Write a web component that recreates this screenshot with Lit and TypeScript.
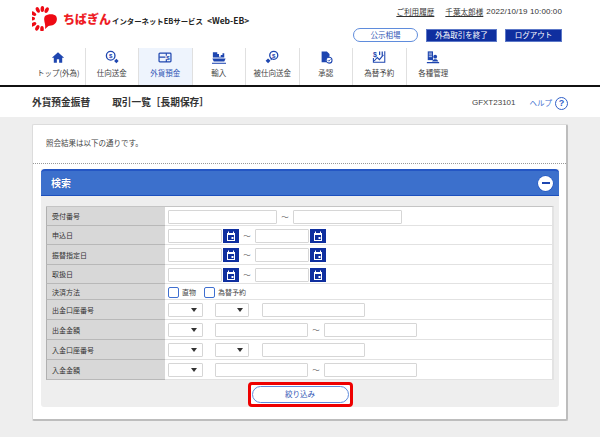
import { LitElement, html, css, svg } from "lit";
import { customElement } from "lit/decorators.js";

const icons: Record<string, unknown> = {
  home: svg`<path d="M8 2 1 8.200h2.200V14h3.500v-4h2.600v4h3.500V8.200H15z"/>`,
  send: svg`<circle cx="6.500" cy="6" r="4.900" fill="none" stroke="currentColor" stroke-width="1.500"/><text x="6.500" y="8.600" text-anchor="middle" font-size="7" font-family="Liberation Sans" font-weight="700">$</text><path d="M13 9.500l2.600 2.600-2.600 2.600-2.600-2.600z"/>`,
  deposit: svg`<rect x="1.200" y="3" width="13.600" height="10" rx="1" fill="none" stroke="currentColor" stroke-width="1.400"/><path d="M1.500 7.500h7M9.500 3v3M9.500 10v3" stroke="currentColor" stroke-width="1.300" fill="none"/><text x="11.500" y="10.500" text-anchor="middle" font-size="7" font-family="Liberation Sans" font-weight="700">$</text>`,
  ship: svg`<path d="M1 2h5v2h2v3h2V5h2V3h2v5H1z"/><path d="M.5 9h15l-1.500 3.500H2z"/><path d="M0 14h16v1.200H0z"/>`,
  receive: svg`<circle cx="10" cy="5.500" r="4.600" fill="none" stroke="currentColor" stroke-width="1.500"/><text x="10" y="8" text-anchor="middle" font-size="7" font-family="Liberation Sans" font-weight="700">$</text><path d="M3.500 9l2.800 2.800-2.800 2.800L.7 11.800z"/><path d="M6 9.500l1.500-1.200 1 1L7 11z"/>`,
  approve: svg`<path d="M3 1h6l3 3v3.200a4 4 0 0 0-3.500 6.300H3z"/><circle cx="11.500" cy="11" r="3.400" fill="none" stroke="currentColor" stroke-width="1.200"/><path d="M10 11l1.200 1.200 1.800-2" fill="none" stroke="currentColor" stroke-width="1"/>`,
  chart: svg`<text x="3.500" y="7" text-anchor="middle" font-size="8" font-family="Liberation Sans" font-weight="700">$</text><path d="M8 1h1.400v4H8zM11 1h1.400v5H11zM14 .8h1.200v13.200H1V8.500h1.200v4.300H14z"/><path d="M2.500 12 6 8l2.500 2.500L13 5" fill="none" stroke="currentColor" stroke-width="1.300"/>`,
  admin: svg`<rect x="2" y="1" width="6" height="10"/><path d="M3.200 3h3.600M3.200 5h3.600M3.200 7h3.600" stroke="#fff" stroke-width=".8"/><circle cx="10.500" cy="7" r="2.200"/><path d="M7 12.500c.6-2 2-2.600 3.500-2.600s3 .6 3.500 2.600zM1 13.200h14v1.300H1z"/>`,
};

const nav = [
  ["トップ(外為)", "home"],
  ["仕向送金", "send"],
  ["外貨預金", "deposit"],
  ["輸入", "ship"],
  ["被仕向送金", "receive"],
  ["承認", "approve"],
  ["為替予約", "chart"],
  ["各種管理", "admin"],
];

const rays = [28, 2, -25, -58, -88, -122, -152, -180];

@customElement("app-root")
export class AppRoot extends LitElement {
  static styles = css`
    :host {
      display: block;
      width: 600px;
      height: 437px;
      overflow: hidden;
      background: #eeeeee;
      font-family: "Noto Sans CJK JP", "Noto Sans", sans-serif;
      font-size: 7.5px;
      color: #444;
      line-height: 1;
    }
    header { background: #fff; height: 85px; }
    .top { display: flex; justify-content: space-between; height: 48px; padding: 0 38px 0 32px; }
    .logo { display: flex; align-items: center; height: 36px; }
    .mark { width: 32px; height: 26px; margin-top: -1px; color: #ee0a14; flex: none; }
    .bank { color: #ee1c25; font-size: 12px; font-weight: 900; margin: 2px 0 0 -1px; width: 50px; }
    .svc { color: #222; font-size: 7.4px; font-weight: 700; white-space: nowrap; margin: 4px 0 0 -1px; }
    .svc span { margin-left: 4px; font-size: 8.5px; }
    .right { display: flex; flex-direction: column; align-items: flex-end; padding-top: 7px; gap: 11px; }
    .meta { display: flex; align-items: center; gap: 11px; color: #333; height: 10px; }
    .meta u { font-size: 7.6px; }
    .meta .date { margin-left: -8px; font-family: "Liberation Sans", sans-serif; font-size: 8px; letter-spacing: .12px; white-space: nowrap; }
    .btns { display: flex; align-items: center; gap: 8px; }
    .pill { width: 65px; height: 14px; box-sizing: border-box; border: 1px solid #5f8cdc; border-radius: 7px; color: #2f55b5; display: flex; align-items: center; justify-content: center; background: #fff; }
    .solid { height: 13px; box-sizing: border-box; background: #0f2f9f; border: 1px solid #5c78c8; color: #fff; display: flex; align-items: center; justify-content: center; }
    .w71 { width: 71px; }
    .w57 { width: 57px; }
    nav { display: grid; grid-template-columns: repeat(8, 53.5px); padding-left: 32px; height: 37px; }
    .item { display: flex; flex-direction: column; align-items: center; gap: 4px; padding-top: 2px; box-sizing: border-box; border-right: 1px solid #e0e0e0; color: #444; white-space: nowrap; }
    .item:last-child { border-right: 0; }
    .item.on { background: #eef4fd; color: #2f55b5; }
    .item svg { width: 14px; height: 15px; fill: #1e46b0; color: #1e46b0; }
    .rule { height: 2px; background: #111; }
    .title { height: 30px; background: #fff; display: flex; align-items: center; padding: 2px 32px 0; box-sizing: border-box; }
    .title b { font-size: 9.7px; font-weight: 700; color: #333; }
    .title b + b { margin-left: 22px; white-space: nowrap; }
    .code { margin-left: auto; font-family: "Liberation Sans", sans-serif; font-size: 8px; color: #444; }
    .help { margin-left: 14px; color: #3f6fd0; }
    .q { margin-left: 3px; width: 13px; height: 13px; box-sizing: border-box; border: 1.5px solid #2f5fc8; border-radius: 50%; color: #2f5fc8; font: 700 9px/10px "Liberation Sans", sans-serif; text-align: center; }
    .card { margin: 7px 32px 0; height: 297px; box-sizing: border-box; background: #fff; border: 1px solid #dcdcdc; border-right: 2px solid #bdbdbd; border-bottom: 2px solid #bdbdbd; border-radius: 2px; }
    .msg { height: 39px; box-sizing: border-box; padding: 14px 13px 0; border-bottom: 1px dotted #999; color: #444; }
    .panel { margin: 5px 7px 0 8px; background: #eeeeee; border-radius: 0 0 3px 3px; height: 238px; }
    .head { height: 27px; box-sizing: border-box; background: #3c70cc; border-top: 2px solid #2456c4; border-bottom: 1px solid #1c4fbd; border-radius: 4px 4px 0 0; display: flex; align-items: center; justify-content: space-between; padding: 0 0 0 10px; }
    .head b { color: #fff; font-size: 10px; font-weight: 700; text-shadow: 0 0 1px #123a9c; }
    .minus { width: 15px; height: 15px; margin-right: 6px; border-radius: 50%; background: #fff; display: flex; align-items: center; justify-content: center; box-shadow: 0 0 0 .5px #1c4fbd; }
    .minus i { display: block; width: 8px; height: 2px; background: #1e46b0; }
    .table { margin: 10px 5px 0; background: #fff; display: grid; grid-template-columns: 119px 1fr; grid-template-rows: 19px 19px 20px 19px 16px 20px 20px 20px 20px; border-top: 1px solid #c4c4c4; border-right: 2px solid #e3e3e3; box-sizing: border-box; }
    .label { background: #d8d8d8; border-left: 1.5px solid #b0b0b0; border-bottom: 1.5px solid #b8b8b8; padding: 1px 0 0 5px; display: flex; align-items: center; color: #333; font-size: 7px; box-sizing: border-box; }
    .cell { display: flex; align-items: center; padding: 1px 0 0 3px; border-bottom: 1.5px solid #e2e2e2; box-sizing: border-box; }
    .in { height: 14px; box-sizing: border-box; background: #fff; border: 1px solid #d6d6d6; border-radius: 1px; flex: none; }
    .w109 { width: 109px; }
    .w54 { width: 54px; }
    .w53 { width: 53.5px; }
    .w103 { width: 103px; margin-left: 13px; }
    .w93 { width: 93px; }
    .til { width: 16px; text-align: center; color: #555; font-size: 7.5px; flex: none; }
    .cal { width: 16.5px; height: 14px; margin-left: .5px; background: #0f2f9f; display: flex; align-items: center; justify-content: center; flex: none; }
    .w53 + .cal { margin-left: 1px; }
    .cal svg { width: 10px; height: 10px; }
    .sel { height: 14px; box-sizing: border-box; background: #fff; border: 1px solid #d6d6d6; border-radius: 1px; display: flex; align-items: center; justify-content: flex-end; padding-right: 5px; flex: none; }
    .sel i { width: 0; height: 0; border-left: 3px solid transparent; border-right: 3px solid transparent; border-top: 4px solid #333; }
    .s35 { width: 35px; margin-right: 12px; }
    .s34 { width: 34px; }
    .chk { width: 11px; height: 11px; box-sizing: border-box; border: 1.2px solid #3f6fd0; border-radius: 2px; background: #fff; flex: none; }
    .opt { margin-left: 3px; color: #444; font-size: 7px; }
    .opt.a { width: 22px; }
    .go { margin: 1.5px auto 0; width: 105px; height: 25px; box-sizing: border-box; border: 3px solid #ee0000; border-radius: 4px; padding: 1px; background: #fff; display: flex; }
    .go span { flex: 1; border: 1px solid #5f8cdc; border-radius: 9px; color: #2f55b5; display: flex; align-items: center; justify-content: center; background: #fff; font-size: 7.5px; }
  `;

  private cal() {
    return html`<div class="cal"><svg viewBox="0 0 10 10"><path d="M1 2h8v8H1z" fill="#fff"/><path d="M2.500 .5v2M7.500 .5v2" stroke="#fff" stroke-width="1"/><path d="M2 4h6v5H2z" fill="#0f2f9f"/><rect x="5.500" y="6" width="2" height="2" fill="#fff"/></svg></div>`;
  }

  private dateRow(label: string) {
    return html`<div class="label">${label}</div>
      <div class="cell"><div class="in w54"></div>${this.cal()}<span class="til">～</span><div class="in w53"></div>${this.cal()}</div>`;
  }

  private acct(label: string) {
    return html`<div class="label">${label}</div>
      <div class="cell"><div class="sel s35"><i></i></div><div class="sel s34"><i></i></div><div class="in w103"></div></div>`;
  }

  private amount(label: string) {
    return html`<div class="label">${label}</div>
      <div class="cell"><div class="sel s35"><i></i></div><div class="in w93"></div><span class="til">～</span><div class="in w93"></div></div>`;
  }

  render() {
    return html`
      <header>
        <div class="top">
          <div class="logo">
            <svg class="mark" viewBox="0 0 32 26" fill="currentColor">
              ${rays.map((a) => svg`<ellipse cx="10" cy="4" rx="1.800" ry="3" transform="rotate(${a} 10 14)"/>`)}
              <path d="M13 11c3-2.500 9-2.500 11 0 2 3 .5 7-2 8.500-2 1.200-4 1-5.500 1.500L13 24c.5-3 0-5-.5-7-.5-3-.5-4.500.5-6z"/>
            </svg>
            <span class="bank">ちばぎん</span>
            <span class="svc">インターネットEBサービス<span>&lt;Web-EB&gt;</span></span>
          </div>
          <div class="right">
            <div class="meta"><u>ご利用履歴</u><u>千葉太郎様</u><span class="date">2022/10/19 10:00:00</span></div>
            <div class="btns">
              <div class="pill">公示相場</div>
              <div class="solid w71">外為取引を終了</div>
              <div class="solid w57">ログアウト</div>
            </div>
          </div>
        </div>
        <nav>
          ${nav.map(([t, i]) => html`<div class="item ${t === "外貨預金" ? "on" : ""}"><svg viewBox="0 0 16 16">${icons[i]}</svg><span>${t}</span></div>`)}
        </nav>
      </header>
      <div class="rule"></div>
      <div class="title">
        <b>外貨預金振替</b><b>取引一覧［長期保存］</b>
        <span class="code">GFXT23101</span><span class="help">ヘルプ</span><div class="q">?</div>
      </div>
      <div class="card">
        <div class="msg">照会結果は以下の通りです。</div>
        <div class="panel">
          <div class="head"><b>検索</b><div class="minus"><i></i></div></div>
          <div class="table">
            <div class="label">受付番号</div>
            <div class="cell"><div class="in w109"></div><span class="til">～</span><div class="in w109"></div></div>
            ${this.dateRow("申込日")}
            ${this.dateRow("振替指定日")}
            ${this.dateRow("取扱日")}
            <div class="label">決済方法</div>
            <div class="cell"><div class="chk"></div><span class="opt a">直物</span><div class="chk"></div><span class="opt">為替予約</span></div>
            ${this.acct("出金口座番号")}
            ${this.amount("出金金額")}
            ${this.acct("入金口座番号")}
            ${this.amount("入金金額")}
          </div>
          <div class="go"><span>絞り込み</span></div>
        </div>
      </div>
    `;
  }
}
